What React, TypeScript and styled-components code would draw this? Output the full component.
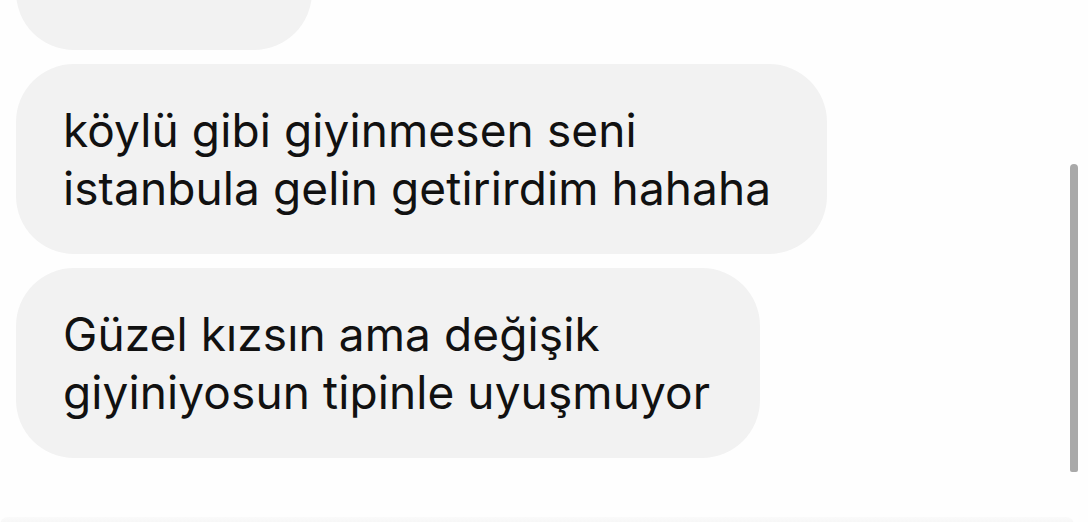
import styled, { createGlobalStyle } from "styled-components";

const GlobalStyle = createGlobalStyle`
  html, body {
    margin: 0;
    padding: 0;
    background: #fefefe;
  }
  body {
    font-family: Inter, "Open Sans", "Liberation Sans", sans-serif;
    -webkit-font-smoothing: antialiased;
  }
`;

const Screen = styled.div`
  position: relative;
  width: 1088px;
  height: 522px;
  overflow: hidden;
  background: #fefefe;
`;

// message list, scrolled so the first bubble is half out of view
const Thread = styled.div`
  display: flex;
  flex-direction: column;
  align-items: flex-start;
  gap: 14px;
  padding-left: 16px;
  margin-top: -140px;
`;

const Bubble = styled.div<{ w: number; lift?: number }>`
  box-sizing: border-box;
  width: ${(p) => p.w}px;
  height: 190px;
  padding: 0 20px ${(p) => (p.lift || 0) * 2}px 47px;
  display: flex;
  flex-direction: column;
  justify-content: center;
  background: #f2f2f2;
  border-radius: 58px;
  color: #111;
  font-size: 46px;
  line-height: 58px;
  letter-spacing: 0.1px;
  white-space: nowrap;
`;

const Line = styled.div``;

const Scrollbar = styled.div`
  position: absolute;
  top: 164px;
  left: 1070px;
  width: 8px;
  height: 308px;
  background: #a9a9a9;
  border-radius: 4px 4px 2px 2px;
`;

// top edge of the next row peeking in at the bottom
const NextRow = styled.div`
  position: absolute;
  left: 0;
  right: 14px;
  top: 517px;
  height: 12px;
  border-radius: 8px 8px 0 0;
  background: linear-gradient(#fafafa, #f3f3f3);
`;

const messages: { w: number; lift?: number; lines: string[] }[] = [
  { w: 296, lift: 11, lines: ["", "Hey"] },
  { w: 811, lines: ["köylü gibi giyinmesen seni", "istanbula gelin getirirdim hahaha"] },
  { w: 744, lines: ["Güzel kızsın ama değişik", "giyiniyosun tipinle uyuşmuyor"] },
];

const App = () => {
  return (
    <Screen>
      <GlobalStyle />
      <Thread>
        {messages.map((m, i) => (
          <Bubble key={i} w={m.w} lift={m.lift}>
            {m.lines.map((l, j) => (
              <Line key={j}>{l || "\u00a0"}</Line>
            ))}
          </Bubble>
        ))}
      </Thread>
      <Scrollbar />
      <NextRow />
    </Screen>
  );
};

export default App;
